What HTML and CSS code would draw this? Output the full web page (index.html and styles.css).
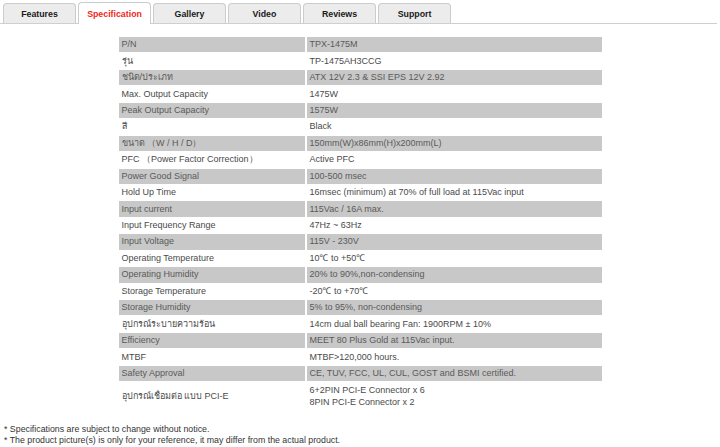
FILE: index.html
```html
<!DOCTYPE html>
<html>
<head>
<meta charset="utf-8">
<link rel="stylesheet" href="styles.css">
</head>
<body>
<div class="tabs">
  <div class="tab">Features</div>
  <div class="tab active">Specification</div>
  <div class="tab">Gallery</div>
  <div class="tab">Video</div>
  <div class="tab">Reviews</div>
  <div class="tab">Support</div>
</div>
<div class="content">
<table class="spec">
  <tr><td class="k">P/N</td><td>TPX-1475M</td></tr>
  <tr><td class="k">รุ่น</td><td>TP-1475AH3CCG</td></tr>
  <tr><td class="k">ชนิด/ประเภท</td><td>ATX 12V 2.3 &amp; SSI EPS 12V 2.92</td></tr>
  <tr><td class="k">Max. Output Capacity</td><td>1475W</td></tr>
  <tr><td class="k">Peak Output Capacity</td><td>1575W</td></tr>
  <tr><td class="k">สี</td><td>Black</td></tr>
  <tr><td class="k">ขนาด （W / H / D）</td><td>150mm(W)x86mm(H)x200mm(L)</td></tr>
  <tr><td class="k">PFC （Power Factor Correction）</td><td>Active PFC</td></tr>
  <tr><td class="k">Power Good Signal</td><td>100-500 msec</td></tr>
  <tr><td class="k">Hold Up Time</td><td>16msec (minimum) at 70% of full load at 115Vac input</td></tr>
  <tr><td class="k">Input current</td><td>115Vac / 16A max.</td></tr>
  <tr><td class="k">Input Frequency Range</td><td>47Hz ~ 63Hz</td></tr>
  <tr><td class="k">Input Voltage</td><td>115V - 230V</td></tr>
  <tr><td class="k">Operating Temperature</td><td>10℃ to +50℃</td></tr>
  <tr><td class="k">Operating Humidity</td><td>20% to 90%,non-condensing</td></tr>
  <tr><td class="k">Storage Temperature</td><td>-20℃ to +70℃</td></tr>
  <tr><td class="k">Storage Humidity</td><td>5% to 95%, non-condensing</td></tr>
  <tr><td class="k">อุปกรณ์ระบายความร้อน</td><td>14cm dual ball bearing Fan: 1900RPM ± 10%</td></tr>
  <tr><td class="k">Efficiency</td><td>MEET 80 Plus Gold at 115Vac input.</td></tr>
  <tr><td class="k">MTBF</td><td>MTBF&gt;120,000 hours.</td></tr>
  <tr><td class="k">Safety Approval</td><td>CE, TUV, FCC, UL, CUL, GOST and BSMI certified.</td></tr>
  <tr class="tall"><td class="k">อุปกรณ์เชื่อมต่อ แบบ PCI-E</td><td>6+2PIN PCI-E Connector x 6<br>8PIN PCI-E Connector x 2</td></tr>
</table>
<div class="notes">
  <p>* Specifications are subject to change without notice.</p>
  <p>* The product picture(s) is only for your reference, it may differ from the actual product.</p>
</div>
</div>
</body>
</html>
```
FILE: styles.css
```css
html, body {
  margin: 0;
  padding: 0;
  background: #ffffff;
}
body {
  font-family: "Liberation Sans", Arial, "Noto Sans", sans-serif;
  color: #4a4a4a;
}
.tabs {
  display: flex;
  align-items: flex-end;
  gap: 2px;
  width: 714px;
  padding-left: 3px;
  height: 23px;
  border-bottom: 1px solid #cfcfcf;
}
.tab {
  width: 71px;
  height: 19px;
  border: 1px solid #cccccc;
  border-bottom: none;
  border-radius: 4px 4px 0 0;
  background: #ececec;
  font-size: 8.8px;
  font-weight: bold;
  color: #1a1a1a;
  display: flex;
  align-items: center;
  justify-content: center;
}
.tab.active {
  height: 21px;
  background: #ffffff;
  color: #f0281e;
  margin-bottom: -1px;
}
.content {
  padding-top: 12px;
}
.spec {
  width: 487px;
  margin: 0 auto;
  border-collapse: separate;
  border-spacing: 2px 1.5px;
  font-size: 9px;
}
.spec td {
  height: 15.45px;
  padding: 0 3px;
  line-height: 11px;
  vertical-align: middle;
  white-space: nowrap;
}
.spec td.k {
  width: 180px;
}
.spec tr:nth-child(odd) td {
  background: #c8c8c8;
  color: #5a5a5a;
}
.spec tr.tall td {
  height: 27px;
  line-height: 12px;
}
.notes {
  padding: 14px 0 0 4px;
  font-size: 8.8px;
  color: #333333;
}
.notes p {
  margin: 0;
  line-height: 11px;
}
```
